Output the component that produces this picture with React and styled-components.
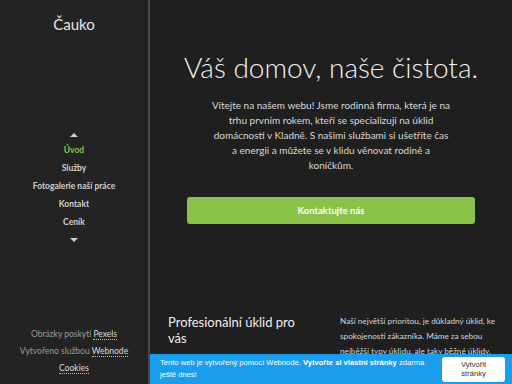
import React from "react";
import styled, { createGlobalStyle } from "styled-components";

const GlobalStyle = createGlobalStyle`
  html, body {
    margin: 0;
    padding: 0;
    background: #1f1f1f;
  }
  body {
    font-family: "Lato", "Open Sans", sans-serif;
    overflow: hidden;
  }
`;

const Page = styled.div`
  display: flex;
  width: 512px;
  height: 384px;
  position: relative;
  overflow: hidden;
`;

const Sidebar = styled.aside`
  width: 148px;
  flex-shrink: 0;
  background: #232323;
  border-right: 2px solid #4a4a4a;
  display: flex;
  flex-direction: column;
  align-items: center;
`;

const Logo = styled.div`
  margin-top: 15px;
  font-size: 15px;
  color: #e6e6e6;
  font-weight: 400;
`;

const Nav = styled.nav`
  margin-top: 100px;
  display: flex;
  flex-direction: column;
  align-items: center;
  gap: 7px;
`;

const Arrow = styled.div`
  width: 0;
  height: 0;
  border-left: 4px solid transparent;
  border-right: 4px solid transparent;
  ${(p) =>
    p.$down
      ? "border-top: 4px solid #cfcfcf; margin-top: 3px;"
      : "border-bottom: 4px solid #cfcfcf; margin-bottom: 1px;"}
`;

const NavItem = styled.a`
  font-size: 8.5px;
  font-weight: 700;
  line-height: 11px;
  color: ${(p) => (p.$active ? "#8bc34a" : "#cfcfcf")};
  text-decoration: none;
`;

const SideFooter = styled.div`
  margin-top: auto;
  margin-bottom: 10px;
  display: flex;
  flex-direction: column;
  align-items: center;
  gap: 7px;
  font-size: 8.5px;
  color: #9a9a9a;
`;

const FootLink = styled.span`
  color: #dcdcdc;
  border-bottom: 1px dotted #bdbdbd;
`;

const Main = styled.main`
  flex: 1;
  background: #1f1f1f;
  display: flex;
  flex-direction: column;
  overflow: hidden;
`;

const Hero = styled.section`
  display: flex;
  flex-direction: column;
  align-items: center;
  padding: 48px 37px 0;
`;

const Heading = styled.h1`
  margin: 0;
  font-size: 28px;
  font-weight: 300;
  color: #f2f2f2;
  line-height: 38px;
  white-space: nowrap;
`;

const Intro = styled.p`
  margin: 12px 0 0;
  max-width: 240px;
  text-align: center;
  font-size: 10px;
  line-height: 15px;
  color: #dadada;
`;

const CtaButton = styled.button`
  margin-top: 24px;
  width: 288px;
  height: 27px;
  border: none;
  border-radius: 3px;
  background: #8bc34a;
  color: #ffffff;
  font-family: inherit;
  font-size: 9.5px;
  font-weight: 700;
  cursor: pointer;
`;

const Features = styled.section`
  display: grid;
  grid-template-columns: 1fr 156px;
  gap: 20px;
  padding: 90px 16px 0 18px;
`;

const FeatureTitle = styled.h2`
  margin: 0;
  font-size: 13px;
  font-weight: 400;
  line-height: 16px;
  color: #eeeeee;
  max-width: 140px;
`;

const FeatureText = styled.p`
  margin: 0;
  font-size: 8.2px;
  line-height: 15px;
  color: #d6d6d6;
`;

const Banner = styled.div`
  position: absolute;
  left: 150px;
  right: 0;
  bottom: 0;
  height: 30px;
  background: #1a9ded;
  display: flex;
  align-items: center;
  justify-content: space-between;
  padding: 0 7px 0 10px;
  box-sizing: border-box;
  font-family: "Liberation Sans", Arial, sans-serif;
`;

const BannerText = styled.div`
  font-size: 7.6px;
  line-height: 12px;
  color: #ffffff;
  max-width: 265px;
`;

const BannerButton = styled.button`
  width: 63px;
  height: 25px;
  background: #ffffff;
  border: none;
  border-radius: 3px;
  font-family: inherit;
  font-size: 7.6px;
  line-height: 9px;
  color: #333333;
  padding: 0;
`;

const navItems = ["Úvod", "Služby", "Fotogalerie naší práce", "Kontakt", "Ceník"];

export default function App() {
  return (
    <Page>
      <GlobalStyle />
      <Sidebar>
        <Logo>Čauko</Logo>
        <Nav>
          <Arrow />
          {navItems.map((item, i) => (
            <NavItem key={item} $active={i === 0}>
              {item}
            </NavItem>
          ))}
          <Arrow $down />
        </Nav>
        <SideFooter>
          <div>
            Obrázky poskytl <FootLink>Pexels</FootLink>
          </div>
          <div>
            Vytvořeno službou <FootLink>Webnode</FootLink>
          </div>
          <FootLink>Cookies</FootLink>
        </SideFooter>
      </Sidebar>
      <Main>
        <Hero>
          <Heading>Váš domov, naše čistota.</Heading>
          <Intro>
            Vítejte na našem webu! Jsme rodinná firma, která je na trhu prvním
            rokem, kteří se specializují na úklid domácnosti v Kladně. S našimi
            službami si ušetříte čas a energii a můžete se v klidu věnovat
            rodině a koníčkům.
          </Intro>
          <CtaButton>Kontaktujte nás</CtaButton>
        </Hero>
        <Features>
          <FeatureTitle>Profesionální úklid pro vás</FeatureTitle>
          <FeatureText>
            Naší největší prioritou, je důkladný úklid, ke spokojenosti
            zákazníka. Máme za sebou nejběžší typy úklidu, ale taky běžné
            úklidy, pokud tedy ale i v zahraničí, a to vždy s úsměvem.
          </FeatureText>
        </Features>
      </Main>
      <Banner>
        <BannerText>
          Tento web je vytvořený pomocí Webnode. <b>Vytvořte si vlastní stránky</b>{" "}
          zdarma ještě dnes!
        </BannerText>
        <BannerButton>
          Vytvořit
          <br />
          stránky
        </BannerButton>
      </Banner>
    </Page>
  );
}
